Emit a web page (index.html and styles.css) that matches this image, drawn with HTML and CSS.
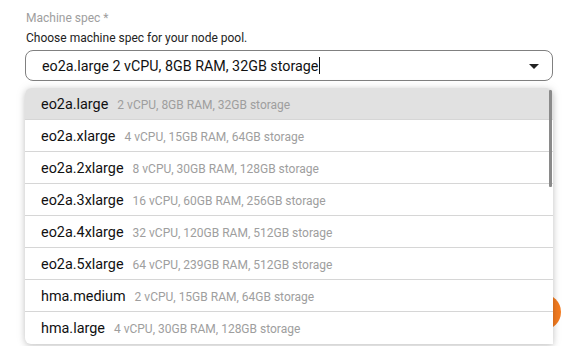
FILE: index.html
```html
<!DOCTYPE html>
<html lang="en">
<head>
  <meta charset="UTF-8">
  <meta name="viewport" content="width=device-width, initial-scale=1.0">
  <title>Machine spec</title>
  <link rel="stylesheet" href="styles.css">
</head>
<body>
  <div class="field">
    <div class="label">Machine spec *</div>
    <div class="hint">Choose machine spec for your node pool.</div>

    <div class="select">
      <span class="value">eo2a.large 2 vCPU, 8GB RAM, 32GB storage</span><span class="caret"></span>
      <svg class="arrow" width="10" height="5" viewBox="0 0 10 5"><path d="M0 0h10L5 5z" fill="#222"/></svg>
    </div>

    <div class="fab"></div>

    <div class="menu">
      <div class="option active"><span class="name">eo2a.large</span><span class="spec">2 vCPU, 8GB RAM, 32GB storage</span></div>
      <div class="option"><span class="name">eo2a.xlarge</span><span class="spec">4 vCPU, 15GB RAM, 64GB storage</span></div>
      <div class="option"><span class="name">eo2a.2xlarge</span><span class="spec">8 vCPU, 30GB RAM, 128GB storage</span></div>
      <div class="option"><span class="name">eo2a.3xlarge</span><span class="spec">16 vCPU, 60GB RAM, 256GB storage</span></div>
      <div class="option"><span class="name">eo2a.4xlarge</span><span class="spec">32 vCPU, 120GB RAM, 512GB storage</span></div>
      <div class="option"><span class="name">eo2a.5xlarge</span><span class="spec">64 vCPU, 239GB RAM, 512GB storage</span></div>
      <div class="option"><span class="name">hma.medium</span><span class="spec">2 vCPU, 15GB RAM, 64GB storage</span></div>
      <div class="option last"><span class="name">hma.large</span><span class="spec">4 vCPU, 30GB RAM, 128GB storage</span></div>
      <div class="scrollbar"></div>
    </div>
  </div>
</body>
</html>
```

FILE: styles.css
```css
body {
  margin: 0;
  font-family: Roboto, "Noto Sans", sans-serif;
  background-color: white;
}
.field {
  position: relative;
  padding: 10px 32px 2px 25px;
}
.label {
  font-size: 12px;
  color: #9e9e9e;
  line-height: 16px;
  margin-left: 1px;
}
.hint {
  font-size: 12px;
  color: #222;
  line-height: 16px;
  margin-top: 4px;
  margin-left: 1px;
}
.select {
  position: relative;
  display: flex;
  align-items: center;
  height: 29px;
  margin-top: 4px;
  border: 1px solid #808080;
  border-radius: 8px;
  padding-left: 16px;
  font-size: 14.3px;
  color: #111;
}
.caret {
  display: inline-block;
  width: 1px;
  height: 17px;
  background-color: #111;
  margin-left: 1px;
}
.arrow {
  position: absolute;
  right: 13px;
  top: 13px;
}
.menu {
  position: relative;
  margin-top: 7px;
  width: 528px;
  background-color: white;
  border-radius: 6px 6px 0 6px;
  box-shadow: 0 2px 6px rgba(0,0,0,0.18), 0 0 12px rgba(0,0,0,0.08);
  overflow: hidden;
}
.option {
  display: flex;
  align-items: baseline;
  height: 29px;
  line-height: 29px;
  padding: 2px 0 0 16px;
  border-bottom: 1px solid #d6d6d6;
}
.option.last {
  border-bottom: none;
  height: 30px;
}
.option.active {
  background-color: #e1e1e1;
}
.name {
  font-size: 14.4px;
  color: #111;
}
.spec {
  font-size: 12px;
  color: #9e9e9e;
  margin-left: 9px;
}
.scrollbar {
  position: absolute;
  right: 1px;
  top: 2px;
  width: 3px;
  height: 97px;
  background-color: #8a8a8a;
  border-radius: 1px;
}
.fab {
  position: absolute;
  left: 525px;
  top: 294px;
  width: 36px;
  height: 36px;
  border-radius: 50%;
  background-color: #f47c20;
}
```
